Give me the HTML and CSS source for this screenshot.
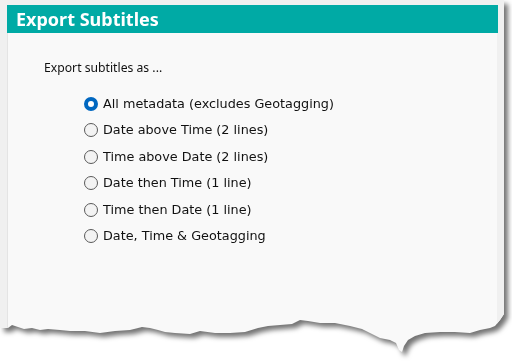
FILE: index.html
```html
<!DOCTYPE html>
<html>
<head>
<meta charset="utf-8">
<link rel="stylesheet" href="styles.css">
</head>
<body>
<div class="shadow">
  <div class="frame">
    <div class="header">Export Subtitles</div>
    <div class="content">
      <div class="lead">Export subtitles as ...</div>
      <div class="options">
        <label class="opt"><span class="radio on"></span>All metadata (excludes Geotagging)</label>
        <label class="opt"><span class="radio"></span>Date above Time (2 lines)</label>
        <label class="opt"><span class="radio"></span>Time above Date (2 lines)</label>
        <label class="opt"><span class="radio"></span>Date then Time (1 line)</label>
        <label class="opt"><span class="radio"></span>Time then Date (1 line)</label>
        <label class="opt"><span class="radio"></span>Date, Time &amp; Geotagging</label>
      </div>
    </div>
  </div>
</div>
</body>
</html>
```
FILE: styles.css
```css
html, body { margin: 0; padding: 0; background: #fff; }
body { width: 512px; height: 364px; overflow: hidden; font-family: "Noto Sans", "Open Sans", sans-serif; }
.shadow {
  width: 504px;
  filter: drop-shadow(4px 4px 2.5px rgba(0,0,0,0.55));
}
.frame {
  box-sizing: border-box;
  width: 504px;
  height: 356px;
  background: #f9f9f9;
  border-left: 7px solid #f0f0f0;
  border-right: 7px solid #f0f0f0;
  border-top: 5px solid #f0f0f0;
  box-shadow: inset 1px 0 0 #e4e4e4;
  clip-path: polygon(0 0, 504px 0, 504px 314px, 500px 320px, 495px 326px, 490px 328px, 480px 330px, 470px 333px, 455px 332px, 440px 332px, 425px 333px, 415px 336px, 408px 340px, 404px 346px, 402px 352px, 399px 350px, 396px 343px, 390px 340px, 380px 338px, 372px 334px, 362px 329px, 350px 326px, 335px 323px, 320px 323px, 308px 321px, 300px 320px, 292px 324px, 280px 325px, 268px 326px, 258px 328px, 245px 332px, 230px 333px, 215px 333px, 200px 331px, 190px 334px, 175px 333px, 165px 332px, 158px 330px, 150px 328px, 142px 327px, 130px 330px, 115px 331px, 100px 333px, 85px 331px, 70px 331px, 60px 330px, 48px 329px, 40px 330px, 32px 328px, 24px 329px, 18px 327px, 12px 325px, 8px 328px, 0 328px);
}
.header {
  background: #00aaa5;
  color: #fff;
  font-weight: 700;
  font-size: 18px;
  height: 28px;
  line-height: 28px;
  padding-left: 9px;
  margin-right: -1px;
}
.content { padding: 27px 0 0 37px; }
.lead { font-size: 12.2px; color: #111; line-height: 16px; }
.options {
  display: flex;
  flex-direction: column;
  gap: 10.4px;
  margin: 20px 0 0 40px;
}
.opt {
  display: flex;
  align-items: center;
  font-family: "DejaVu Sans", Verdana, sans-serif;
  font-size: 12.8px;
  color: #111;
  line-height: 16px;
  height: 16px;
}
.radio {
  box-sizing: border-box;
  width: 14px;
  height: 14px;
  border-radius: 50%;
  border: 1px solid #5a5a5a;
  background: #f3f3f3;
  margin-right: 5px;
  flex: none;
}
.radio.on {
  border: 4px solid #0067c0;
  background: #fff;
}
```
